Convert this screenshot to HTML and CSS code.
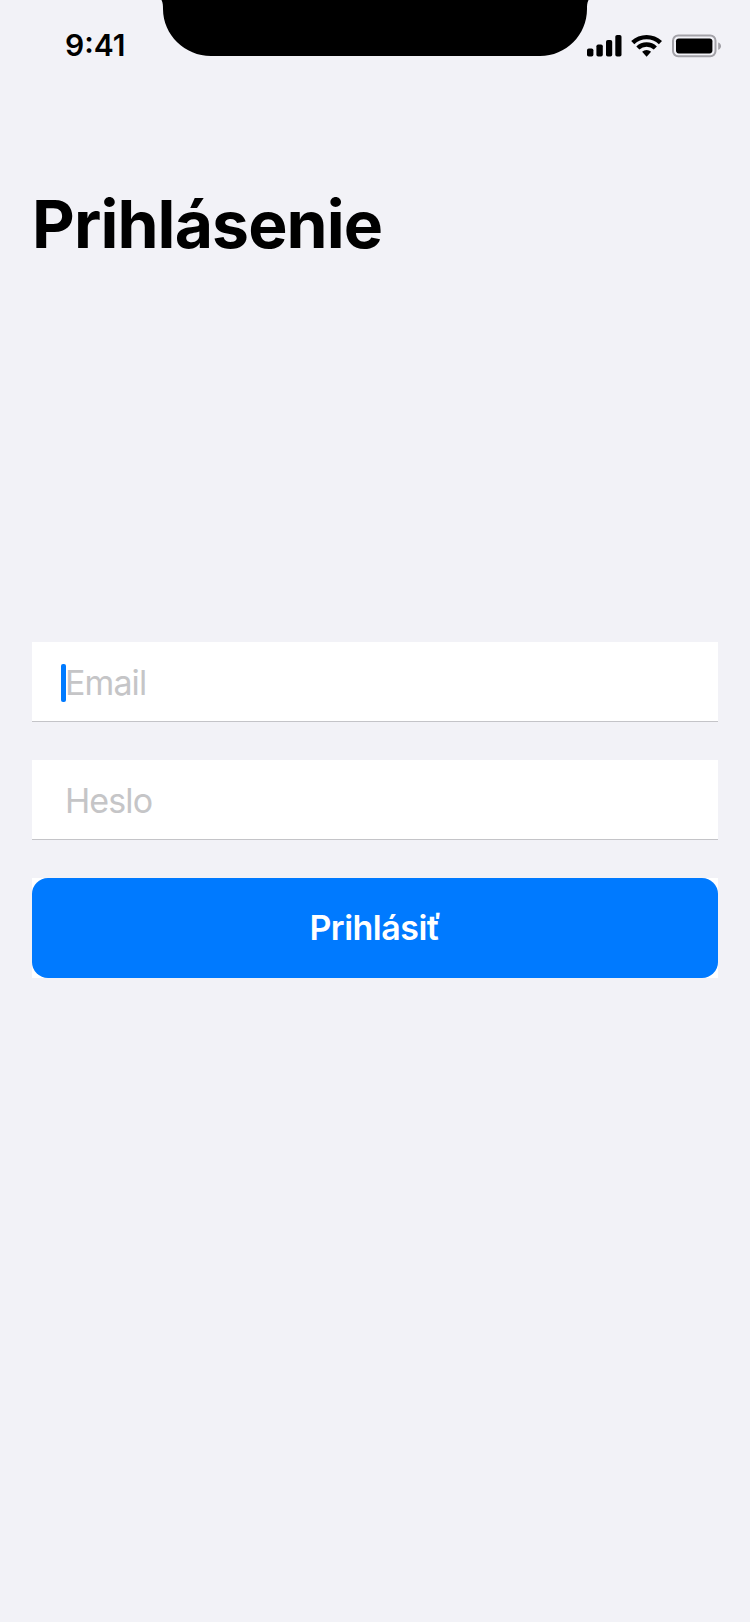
FILE: index.html
```html
<!DOCTYPE html>
<html lang="sk">
<head>
<meta charset="utf-8">
<title>Prihlásenie</title>
<link rel="stylesheet" href="styles.css">
</head>
<body>
<div class="screen">
  <header class="status-bar">
    <span class="time">9:41</span>
    <svg class="notch" width="430" height="56" viewBox="160 0 430 56"><path d="M161.5 0C163 3 163 6 163 9C163 35 185 56 211 56H540C566 56 587 35 587 9C587 6 587 3 588.5 0Z"/></svg>
    <svg class="status-icons" width="138" height="26" viewBox="586 32 138 26">
      <rect x="587" y="48.5" width="6.4" height="8" rx="1.8"/>
      <rect x="596.4" y="44.4" width="6.4" height="12.1" rx="1.8"/>
      <rect x="606" y="40" width="6.2" height="16.5" rx="1.8"/>
      <rect x="615.3" y="35" width="6.2" height="21.5" rx="1.8"/>
      <path d="M631.2 41.1a22.3 22.3 0 0 1 30.8 0l-3.1 3.2a17.8 17.8 0 0 0-24.6 0zM636.3 46.4a15 15 0 0 1 20.6 0l-3.1 3.2a10.6 10.6 0 0 0-14.4 0zM642.1 51.7a7 7 0 0 1 9 0l-4.5 5z"/>
      <rect class="battery-shell" x="673" y="35.5" width="42.5" height="20.8" rx="5.2"/>
      <rect x="676" y="38.4" width="36.4" height="15" rx="2.8"/>
      <path class="battery-tip" d="M718.2 42.4C722 43.5 722 48.5 718.2 49.8Z"/>
    </svg>
  </header>
  <main class="login">
    <h1 class="title">Prihlásenie</h1>
    <form class="form">
      <div class="field"><span class="caret"></span><span class="placeholder">Email</span></div>
      <div class="field"><span class="placeholder">Heslo</span></div>
      <div class="button-cell"><button class="submit" type="button">Prihlásiť</button></div>
    </form>
  </main>
</div>
</body>
</html>
```
FILE: styles.css
```css
* { box-sizing: border-box; }
body {
  margin: 0;
  background: #f2f2f7;
  font-family: Inter, "Liberation Sans", sans-serif;
}
.screen {
  width: 750px;
  height: 1622px;
  overflow: hidden;
}
.status-bar {
  display: flex;
  align-items: flex-start;
  height: 88px;
}
.time {
  width: 160px;
  padding: 25px 0 0 65px;
  font-size: 30px;
  font-weight: 600;
  line-height: 40px;
  letter-spacing: 0;
}
.notch { flex: none; }
.status-icons {
  flex: none;
  margin: 32px 0 0 -4px;
}
.battery-shell {
  fill: none;
  stroke: #a3a2a8;
  stroke-width: 2;
}
.battery-tip { fill: #a3a2a8; }
.login { padding: 96px 32px 0; }
.title {
  margin: 0;
  font-size: 66px;
  font-weight: 700;
  line-height: 80px;
  letter-spacing: -0.87px;
}
.form {
  display: flex;
  flex-direction: column;
  gap: 38px;
  margin-top: 378px;
}
.field {
  position: relative;
  height: 80px;
  padding-left: 33px;
  background: #fff;
  border-bottom: 1px solid #c4c4c8;
  line-height: 81px;
}
.placeholder {
  color: #c5c5c7;
  font-size: 34px;
  letter-spacing: -0.9px;
}
.caret {
  position: absolute;
  left: 29px;
  top: 22px;
  width: 4.5px;
  height: 38px;
  border-radius: 2px;
  background: #007aff;
}
.button-cell {
  height: 100px;
  background: #fff;
}
.submit {
  display: block;
  width: 100%;
  height: 100px;
  padding: 0;
  border: 0;
  border-radius: 16px;
  background: #007aff;
  color: #fff;
  font: 600 34px/100px Inter, "Liberation Sans", sans-serif;
  letter-spacing: -0.5px;
}
```
